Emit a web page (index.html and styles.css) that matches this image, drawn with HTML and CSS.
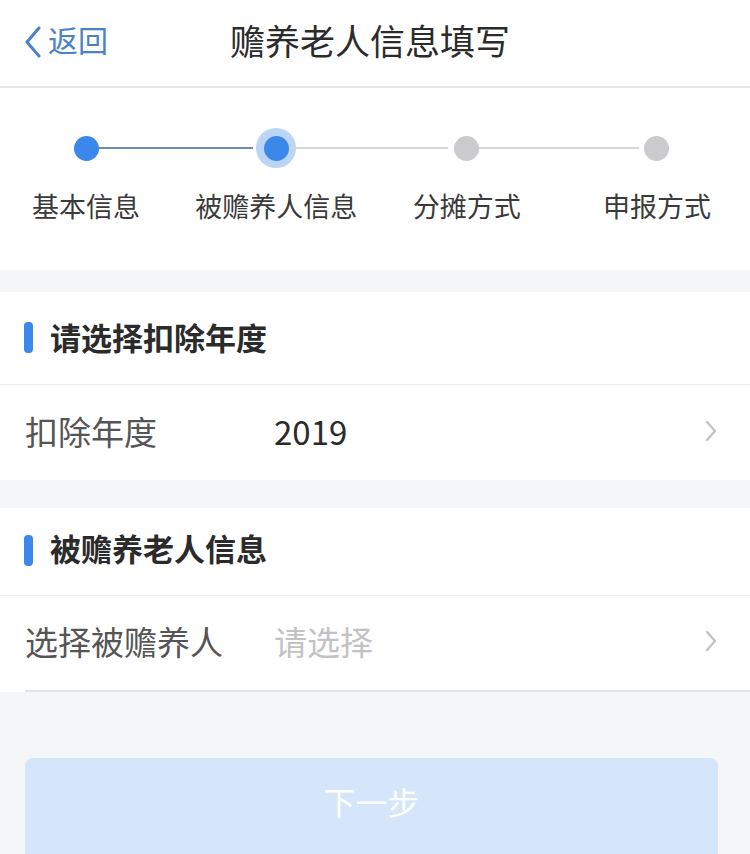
FILE: index.html
```html
<!DOCTYPE html>
<html lang="zh-CN">
<head>
<meta charset="UTF-8">
<meta name="viewport" content="width=device-width, initial-scale=1.0">
<title>赡养老人信息填写</title>
<link rel="stylesheet" href="styles.css">
</head>
<body>
<div class="page">
    <header class="navbar">
        <a class="back" href="#">
            <svg class="back-icon" viewBox="0 0 18 32" width="18" height="32">
                <path d="M15 2 L3 16 L15 30" fill="none" stroke="#4a82c8" stroke-width="3" stroke-linecap="round" stroke-linejoin="round"/>
            </svg>
            <span>返回</span>
        </a>
        <h1 class="title">赡养老人信息填写</h1>
    </header>

    <section class="steps">
        <div class="step done">
            <div class="dot-wrap"><span class="dot"></span></div>
            <div class="step-label">基本信息</div>
        </div>
        <div class="step current">
            <div class="dot-wrap"><span class="dot"></span></div>
            <div class="step-label">被赡养人信息</div>
        </div>
        <div class="step">
            <div class="dot-wrap"><span class="dot"></span></div>
            <div class="step-label">分摊方式</div>
        </div>
        <div class="step last">
            <div class="dot-wrap"><span class="dot"></span></div>
            <div class="step-label">申报方式</div>
        </div>
    </section>

    <section class="card">
        <div class="card-head">请选择扣除年度</div>
        <div class="row">
            <span class="row-label">扣除年度</span>
            <span class="row-value">2019</span>
            <svg class="arrow" viewBox="0 0 14 24" width="14" height="24">
                <path d="M3 3 L11 12 L3 21" fill="none" stroke="#c4c4c4" stroke-width="2.5" stroke-linecap="round" stroke-linejoin="round"/>
            </svg>
        </div>
    </section>

    <section class="card second">
        <div class="card-head">被赡养老人信息</div>
        <div class="row underline">
            <span class="row-label">选择被赡养人</span>
            <span class="row-value placeholder">请选择</span>
            <svg class="arrow" viewBox="0 0 14 24" width="14" height="24">
                <path d="M3 3 L11 12 L3 21" fill="none" stroke="#c4c4c4" stroke-width="2.5" stroke-linecap="round" stroke-linejoin="round"/>
            </svg>
        </div>
    </section>

    <div class="actions">
        <button class="next-btn" type="button" disabled>下一步</button>
    </div>
</div>
</body>
</html>
```

FILE: styles.css
```css
body {
    margin: 0;
    background-color: #f5f6f8;
    font-family: "Noto Sans CJK SC", "Noto Sans", sans-serif;
    color: #333;
}
.page {
    width: 750px;
    height: 854px;
    overflow: hidden;
}
.navbar {
    height: 78px;
    padding-bottom: 8px;
    background-color: #fff;
    border-bottom: 2px solid #e6e6e8;
    display: flex;
    align-items: center;
    position: relative;
}
.back {
    display: flex;
    align-items: center;
    gap: 6px;
    padding-left: 24px;
    color: #4a82c8;
    font-size: 30px;
    text-decoration: none;
    z-index: 1;
}
.back-icon {
    margin-top: 6px;
}
.title {
    position: absolute;
    left: 0;
    right: 0;
    margin: 0;
    text-align: center;
    font-size: 35px;
    font-weight: normal;
    color: #2b2b2b;
    padding-right: 10px;
}

/* step bar */
.steps {
    background-color: #fff;
    height: 182px;
    margin-bottom: 22px;
    display: grid;
    grid-template-columns: repeat(4, 172px);
    justify-content: space-between;
    padding-right: 7px;
}
.step {
    display: flex;
    flex-direction: column;
    align-items: center;
    padding-top: 40px;
}
.dot-wrap {
    width: 40px;
    height: 40px;
    display: flex;
    align-items: center;
    justify-content: center;
    position: relative;
}
.dot-wrap:after {
    content: "";
    position: absolute;
    left: 32px;
    top: 19px;
    width: 160px;
    height: 2px;
    background-color: #d6d6d8;
}
.done .dot-wrap:after {
    background-color: #6c8cb0;
    left: 27px;
    width: 160px;
}
.last .dot-wrap:after {
    display: none;
}
.dot {
    width: 25px;
    height: 25px;
    border-radius: 50%;
    background-color: #cbcbcd;
    position: relative;
    z-index: 1;
}
.done .dot,
.current .dot {
    background-color: #3c87ea;
}
.current .dot-wrap {
    background-color: #b9d6f6;
    border-radius: 50%;
}
.step-label {
    margin-top: 24px;
    font-size: 27px;
    line-height: 1;
    color: #3a3a3a;
    white-space: nowrap;
}

/* cards */
.card {
    background-color: #fff;
    margin-bottom: 28px;
}
.card-head {
    height: 88px;
    padding-bottom: 4px;
    display: flex;
    align-items: center;
    padding-left: 50px;
    font-size: 31px;
    font-weight: bold;
    color: #2b2b2b;
    position: relative;
    border-bottom: 1px solid #ececee;
}
.card-head:before {
    content: "";
    position: absolute;
    left: 24px;
    top: 30px;
    width: 9px;
    height: 31px;
    border-radius: 4px;
    background-color: #3c87ea;
}
.row {
    height: 92px;
    padding-bottom: 3px;
    display: flex;
    align-items: center;
    padding-left: 25px;
    padding-right: 32px;
    font-size: 33px;
}
.row-label {
    width: 249px;
    color: #555;
}
.row-value {
    flex: 1;
    color: #2b2b2b;
}
.placeholder {
    color: #c2c2c4;
}
.second {
    margin-bottom: 0;
}
.second .card-head {
    height: 79px;
    padding-bottom: 8px;
}
.second .card-head:before {
    top: 27px;
}
.second .row {
    height: 90px;
    padding-bottom: 6px;
}
.underline {
    position: relative;
}
.underline:after {
    content: "";
    position: absolute;
    left: 25px;
    right: 0;
    bottom: 0;
    height: 2px;
    background-color: #e4e4e6;
}

/* bottom button */
.actions {
    padding: 66px 32px 0 25px;
}
.next-btn {
    width: 100%;
    height: 110px;
    border: none;
    border-radius: 8px;
    background-color: #d5e6fb;
    color: #fff;
    font-family: inherit;
    font-size: 32px;
    padding-bottom: 26px;
}
```
